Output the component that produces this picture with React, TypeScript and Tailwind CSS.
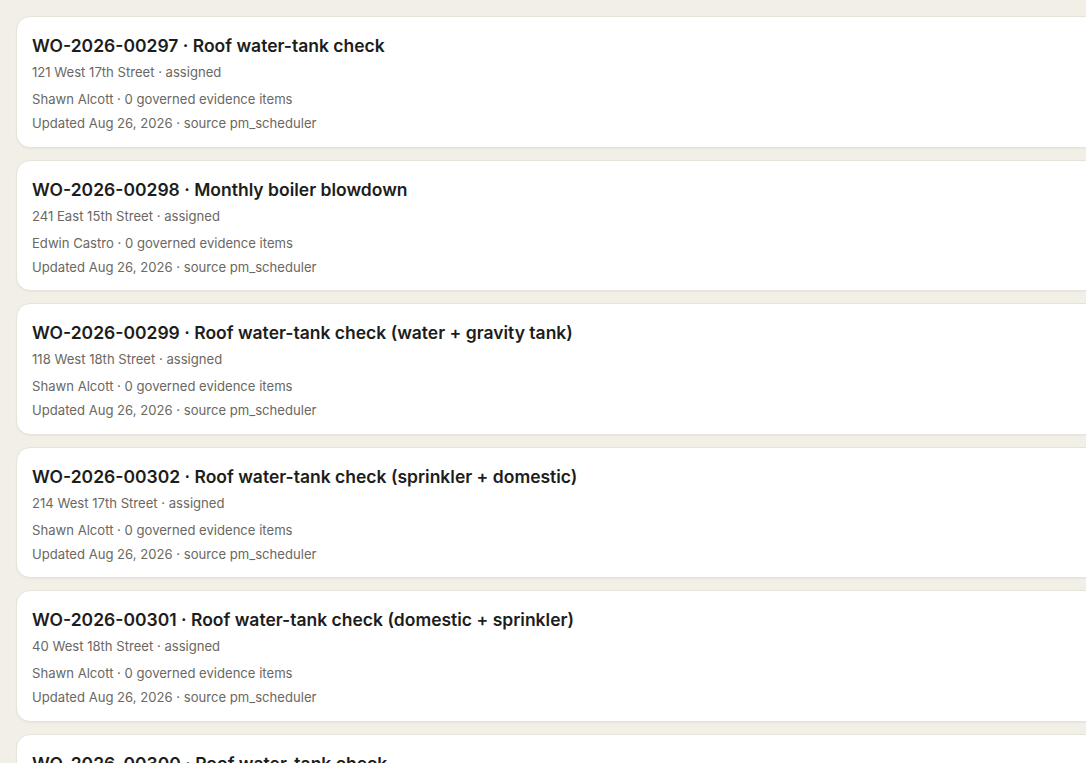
import React from 'react';

type WorkOrder = {
  id: string;
  title: string;
  address: string;
  status: string;
  assignee: string;
  evidence: number;
  updated: string;
  source: string;
};

const orders: WorkOrder[] = [
  { id: 'WO-2026-00297', title: 'Roof water-tank check', address: '121 West 17th Street', status: 'assigned', assignee: 'Shawn Alcott', evidence: 0, updated: 'Aug 26, 2026', source: 'pm_scheduler' },
  { id: 'WO-2026-00298', title: 'Monthly boiler blowdown', address: '241 East 15th Street', status: 'assigned', assignee: 'Edwin Castro', evidence: 0, updated: 'Aug 26, 2026', source: 'pm_scheduler' },
  { id: 'WO-2026-00299', title: 'Roof water-tank check (water + gravity tank)', address: '118 West 18th Street', status: 'assigned', assignee: 'Shawn Alcott', evidence: 0, updated: 'Aug 26, 2026', source: 'pm_scheduler' },
  { id: 'WO-2026-00302', title: 'Roof water-tank check (sprinkler + domestic)', address: '214 West 17th Street', status: 'assigned', assignee: 'Shawn Alcott', evidence: 0, updated: 'Aug 26, 2026', source: 'pm_scheduler' },
  { id: 'WO-2026-00301', title: 'Roof water-tank check (domestic + sprinkler)', address: '40 West 18th Street', status: 'assigned', assignee: 'Shawn Alcott', evidence: 0, updated: 'Aug 26, 2026', source: 'pm_scheduler' },
  { id: 'WO-2026-00300', title: 'Roof water-tank check', address: '121 West 17th Street', status: 'assigned', assignee: 'Shawn Alcott', evidence: 0, updated: 'Aug 26, 2026', source: 'pm_scheduler' },
];

const OrderCard: React.FC<{ order: WorkOrder }> = ({ order }) => (
  <div className="w-[1100px] shrink-0 rounded-[14px] border border-[#e6e3da] bg-white pl-[15px] pr-4 pt-4 pb-[14.5px] shadow-[0_1px_2px_rgba(0,0,0,0.04)]">
    <h2 className="text-[17.5px] leading-[26px] font-semibold text-[#1d1d1b]">
      {order.id} · {order.title}
    </h2>
    <p className="mt-[4px] text-[13.1px] leading-[18px] text-[#6a6862]">
      {order.address} · {order.status}
    </p>
    <p className="mt-[9px] text-[13.1px] leading-[18px] text-[#6a6862]">
      {order.assignee} · {order.evidence} governed evidence items
    </p>
    <p className="mt-[6px] text-[13.1px] leading-[18px] text-[#6a6862]">
      Updated {order.updated} · source {order.source}
    </p>
  </div>
);

export default function App() {
  return (
    <div
      className="h-[763px] w-full overflow-hidden bg-[#f2efe6]"
      style={{ fontFamily: 'Inter, "Noto Sans", sans-serif' }}
    >
      <div className="flex flex-col gap-3 pt-4 pl-4">
        {orders.map((o) => (
          <OrderCard key={o.id} order={o} />
        ))}
      </div>
    </div>
  );
}
